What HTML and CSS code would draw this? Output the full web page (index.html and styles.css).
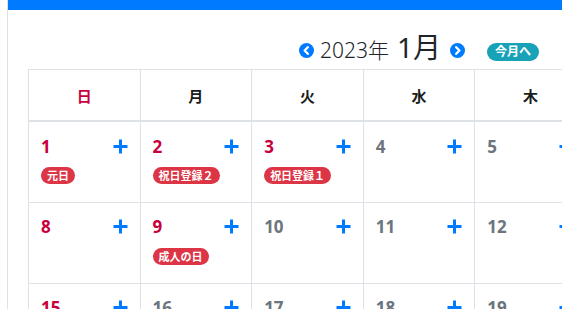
FILE: index.html
```html
<!DOCTYPE html>
<html lang="ja">
<head>
    <meta charset="UTF-8">
    <meta name="viewport" content="width=device-width, initial-scale=1.0">
    <title>カレンダー</title>
    <link rel="stylesheet" href="styles.css">
</head>
<body>
    <div class="side"></div>
    <div class="main">
        <div class="topbar"></div>
        <div class="calendar">
            <div class="cal-head">
                <a href="#" class="nav-btn">
                    <svg width="15" height="15" viewBox="0 0 15 15"><circle cx="7.5" cy="7.5" r="7.5" fill="#007bff"/><path d="M8.8 4.2 L5.6 7.5 L8.8 10.8" fill="none" stroke="#fff" stroke-width="2.3" stroke-linecap="round" stroke-linejoin="round"/></svg>
                </a>
                <span class="year">2023年</span>
                <span class="month">1月</span>
                <a href="#" class="nav-btn">
                    <svg width="15" height="15" viewBox="0 0 15 15"><circle cx="7.5" cy="7.5" r="7.5" fill="#007bff"/><path d="M6.2 4.2 L9.4 7.5 L6.2 10.8" fill="none" stroke="#fff" stroke-width="2.3" stroke-linecap="round" stroke-linejoin="round"/></svg>
                </a>
                <a href="#" class="today-btn">今月へ</a>
            </div>

            <table class="cal-table">
                <thead>
                    <tr>
                        <th class="sun">日</th>
                        <th>月</th>
                        <th>火</th>
                        <th>水</th>
                        <th>木</th>
                        <th>金</th>
                        <th>土</th>
                    </tr>
                </thead>
                <tbody id="calBody"></tbody>
            </table>
        </div>
    </div>

    <script>
        // 祝日データ
        var holidays = {
            1: ["元日"],
            2: ["祝日登録２"],
            3: ["祝日登録１"],
            9: ["成人の日"]
        };

        var plusIcon = '<svg width="15" height="15" viewBox="0 0 15 15"><path d="M7.5 0.5 V14.5 M0.5 7.5 H14.5" stroke="#007bff" stroke-width="3"/></svg>';

        function buildCalendar() {
            var body = document.getElementById("calBody");
            var day = 1;
            for (var w = 0; w < 3; w++) {
                var row = body.insertRow();
                for (var d = 0; d < 7; d++) {
                    var cell = row.insertCell();
                    var isRed = d === 0 || holidays[day];
                    var html = '<div class="day-top"><span class="day-num' + (isRed ? ' red' : '') + '">' + day + '</span>' +
                        '<a href="#" class="add">' + plusIcon + '</a></div>';
                    if (holidays[day]) {
                        for (var i = 0; i < holidays[day].length; i++) {
                            html += '<span class="holiday">' + holidays[day][i] + '</span>';
                        }
                    }
                    cell.innerHTML = html;
                    day++;
                }
            }
        }

        buildCalendar();
    </script>
</body>
</html>
```

FILE: styles.css
```css
body {
    font-family: "Noto Sans", "Noto Sans CJK JP", sans-serif;
    margin: 0;
    padding: 0;
    display: flex;
    overflow: hidden;
    color: #212529;
}

.side {
    width: 7px;
    min-height: 100vh;
    border-right: 1px solid #dee2e6;
    flex-shrink: 0;
}

.main {
    flex-grow: 1;
}

.topbar {
    height: 10px;
    background-color: #007bff;
}

.calendar {
    padding-left: 20px;
}

.cal-head {
    width: 782px;
    height: 38px;
    padding-top: 21px;
    display: flex;
    align-items: center;
    justify-content: center;
}

.nav-btn {
    display: flex;
    width: 15px;
    height: 15px;
}

.year {
    font-size: 21px;
    font-weight: 300;
    margin-left: 6px;
    line-height: 1;
}

.month {
    font-size: 28px;
    margin-left: 8px;
    margin-right: 9px;
    line-height: 1;
    position: relative;
    top: -3px;
}

.today-btn {
    margin-left: 22px;
    background-color: #17a2b8;
    color: white;
    text-decoration: none;
    font-size: 12px;
    font-weight: bold;
    height: 18px;
    line-height: 18px;
    padding: 0 8px;
    border-radius: 9px;
    margin-top: 4px;
}

.cal-table {
    border-collapse: collapse;
    table-layout: fixed;
    width: 782px;
}

.cal-table th {
    height: 50px;
    border: 1px solid #dee2e6;
    border-bottom: 2px solid #dee2e6;
    font-size: 15px;
    font-weight: bold;
    padding: 0;
    color: #1a1d20;
}

.cal-table th.sun {
    color: #c8003c;
}

.cal-table td {
    height: 81px;
    border: 1px solid #dee2e6;
    vertical-align: top;
    padding: 14px 12px 0 12px;
    box-sizing: border-box;
}

.day-top {
    display: flex;
    justify-content: space-between;
    align-items: center;
    height: 20px;
}

.day-num {
    font-size: 17px;
    font-weight: bold;
    color: #6c757d;
}

.day-num.red {
    color: #c8003c;
}

.add {
    display: flex;
}

.holiday {
    display: inline-block;
    margin-top: 11px;
    background-color: #dc3545;
    color: white;
    font-size: 11px;
    font-weight: bold;
    height: 17px;
    line-height: 17px;
    padding: 0 6px;
    border-radius: 9px;
}
```
